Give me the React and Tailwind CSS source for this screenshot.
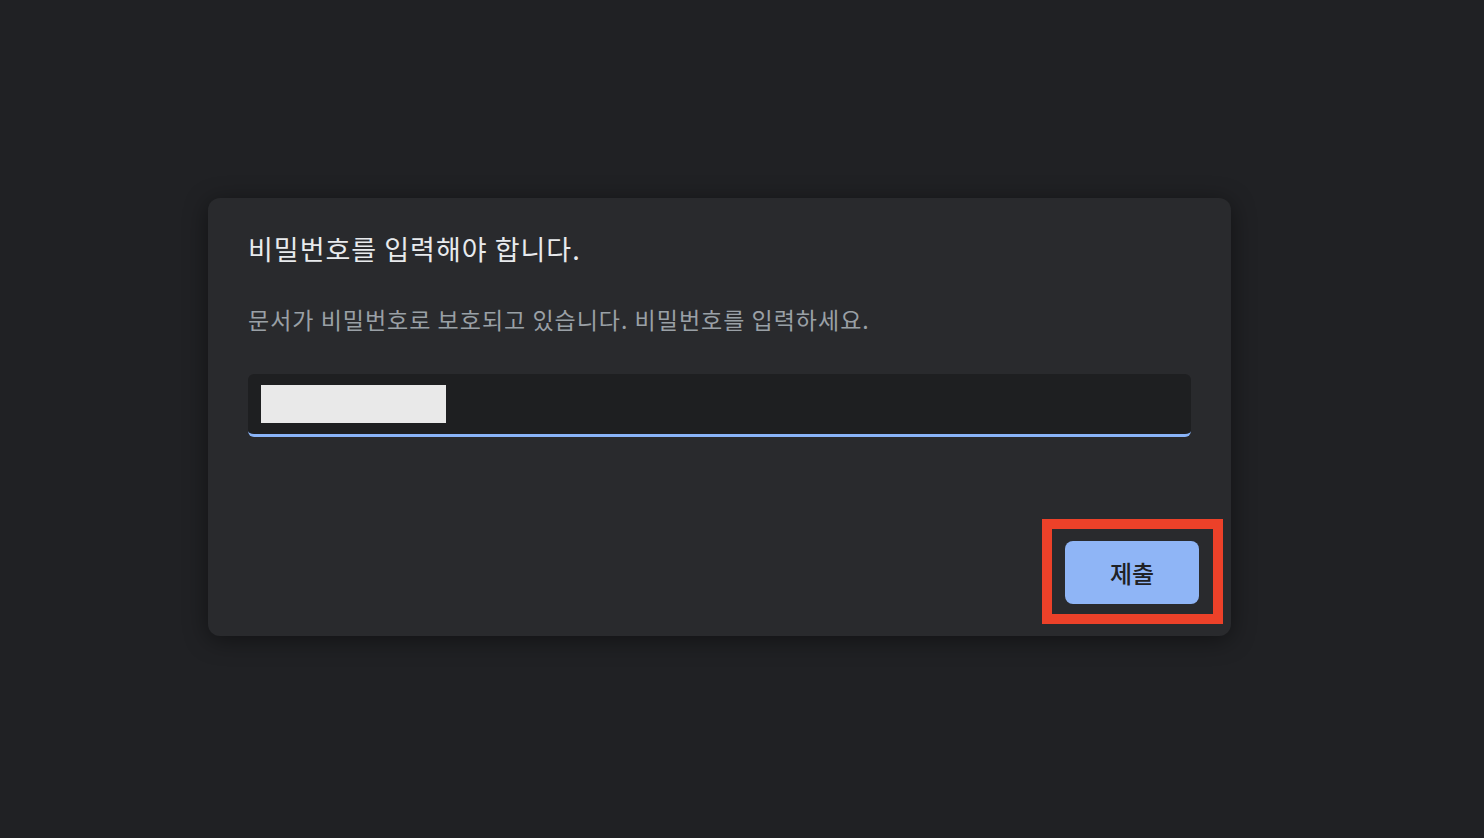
import React from 'react'

export default function App() {
  return (
    <div
      className="w-[1484px] h-[838px] bg-[#202124] flex pl-[208px] pt-[198px]"
      style={{ fontFamily: '"Noto Sans CJK KR", "Noto Sans", sans-serif' }}
    >
      <div className="w-[1023px] h-[438px] bg-[#292a2d] rounded-[12px] shadow-[0_4px_24px_rgba(0,0,0,0.45)] flex flex-col pl-[40px] pr-[32px] pt-[31px] pb-[32px]">
        <h1 className="text-[27px] leading-[40px] tracking-[1px] text-[#e8eaed] font-normal">
          비밀번호를 입력해야 합니다.
        </h1>
        <p className="mt-[34px] text-[23px] leading-[32px] tracking-[1px] text-[#9aa0a6]">
          문서가 비밀번호로 보호되고 있습니다. 비밀번호를 입력하세요.
        </p>
        <div className="mt-[39px] mr-[8px] h-[63px] bg-[#1e1f21] rounded-[6px] border-b-[3px] border-[#8ab4f8] flex items-start pl-[13px] pt-[11px]">
          <div className="w-[185px] h-[38px] bg-[#e9e9e9]" />
        </div>
        <div className="flex-1" />
        <div className="flex justify-end">
          <div className="relative">
            <button className="w-[134px] h-[63px] rounded-[8px] bg-[#8fb5f6] text-[#202124] text-[24px] font-medium">
              제출
            </button>
            <div className="absolute -left-[23px] -top-[22px] -right-[24px] -bottom-[20px] border-[10px] border-[#ec4129] pointer-events-none" />
          </div>
        </div>
      </div>
    </div>
  )
}
